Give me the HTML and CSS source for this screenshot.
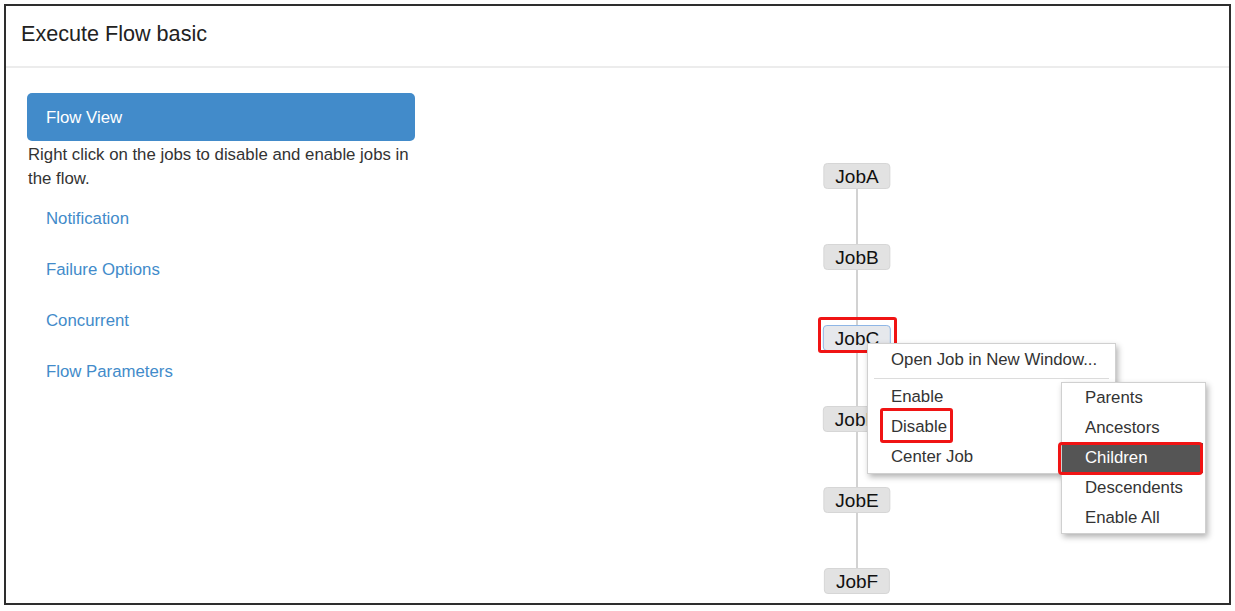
FILE: index.html
```html
<!DOCTYPE html>
<html>
<head>
<meta charset="utf-8">
<link rel="stylesheet" href="styles.css">
</head>
<body>
<div class="frame">
  <div class="header"><h3 class="title">Execute Flow basic</h3></div>
  <div class="content">
    <div class="sidebar">
      <div class="pill-active">Flow View</div>
      <p class="desc">Right click on the jobs to disable and enable jobs in the flow.</p>
      <ul class="nav">
        <li><a href="#">Notification</a></li>
        <li><a href="#">Failure Options</a></li>
        <li><a href="#">Concurrent</a></li>
        <li><a href="#">Flow Parameters</a></li>
      </ul>
    </div>
    <div class="graph">
      <div class="edge"></div>
      <div class="node n1">JobA</div>
      <div class="node n2">JobB</div>
      <div class="node n3 selected">JobC</div>
      <div class="node n4">JobD</div>
      <div class="node n5">JobE</div>
      <div class="node n6">JobF</div>
      <div class="mark mark-jobc"></div>
      <ul class="menu ctx">
        <li>Open Job in New Window...</li>
        <li class="divider"></li>
        <li>Enable</li>
        <li>Disable</li>
        <li>Center Job</li>
      </ul>
      <ul class="menu sub">
        <li>Parents</li>
        <li>Ancestors</li>
        <li class="active">Children</li>
        <li>Descendents</li>
        <li>Enable All</li>
      </ul>
      <div class="mark mark-disable"></div>
      <div class="mark mark-children"></div>
    </div>
  </div>
</div>
</body>
</html>
```
FILE: styles.css
```css
html, body {
  margin: 0;
  padding: 0;
  background: #fff;
}
body {
  font-family: "Liberation Sans", Arial, sans-serif;
  font-size: 16.8px;
  line-height: 24px;
  color: #333;
}
.frame {
  box-sizing: border-box;
  margin: 4px 4px 0 4px;
  width: 1227px;
  height: 601px;
  border: 2px solid #2e2e2e;
  display: flex;
  flex-direction: column;
  overflow: hidden;
}
.header {
  padding: 15px 15px 19px;
  border-bottom: 2px solid #ececec;
}
.title {
  margin: 0;
  font-size: 21.6px;
  line-height: 26px;
  font-weight: normal;
  color: #222;
}
.content {
  flex: 1;
  display: flex;
  padding: 25px 0 0 21px;
}
.sidebar {
  width: 388px;
  flex: none;
}
.pill-active {
  background: #428bca;
  color: #fff;
  border-radius: 5px;
  padding: 13px 19px 11px;
  line-height: 24px;
}
.desc {
  margin: 0 0 -1px;
  padding: 2px 0 0 1px;
}
.nav {
  list-style: none;
  margin: 0;
  padding: 0;
}
.nav li {
  margin-top: 3px;
}
.nav a {
  display: block;
  padding: 14px 19px 10px;
  color: #428bca;
  text-decoration: none;
}
.graph {
  flex: 1;
  position: relative;
}
.edge {
  position: absolute;
  left: 441px;
  top: 96px;
  width: 2px;
  height: 379px;
  background: #d2d2d2;
}
.node {
  position: absolute;
  left: 442px;
  transform: translateX(-50%);
  height: 24px;
  padding: 0 11px;
  font-size: 19px;
  line-height: 25px;
  color: #111;
  background: #e2e2e2;
  border: 1px solid #d6d6d6;
  border-radius: 4px;
  white-space: nowrap;
}
.n1 { top: 70px; }
.n2 { top: 151px; }
.n3 { top: 232px; }
.n4 { top: 313px; }
.n5 { top: 394px; }
.n6 { top: 475px; }
.node.selected {
  background: #e6e8ec;
  border-color: #8fb6e6;
}
.mark {
  position: absolute;
  box-sizing: border-box;
  border: 3px solid #f01414;
  border-radius: 3px;
}
.mark-jobc {
  left: 403px;
  top: 224px;
  width: 79px;
  height: 36px;
}
.mark-disable {
  left: 465px;
  top: 315px;
  width: 73px;
  height: 35px;
}
.mark-children {
  left: 643px;
  top: 349px;
  width: 145px;
  height: 33px;
  border-radius: 4px;
}
.menu {
  position: absolute;
  list-style: none;
  margin: 0;
  padding: 1px 0 1px;
  background: #fff;
  border: 1px solid #d0d0d0;
  box-shadow: 2px 3px 6px rgba(0, 0, 0, 0.3);
}
.menu li {
  padding: 3px 23px;
  height: 24px;
  line-height: 24px;
  color: #333;
  white-space: nowrap;
}
.menu li.divider {
  height: 1px;
  padding: 0;
  margin: 3px 6px;
  background: #dcdcdc;
}
.ctx {
  left: 452px;
  top: 250px;
  width: 247px;
}
.sub {
  left: 646px;
  top: 289px;
  width: 143px;
  padding: 0;
}
.sub li {
  padding-left: 23px;
}
.menu li.active {
  background: #555;
  color: #fff;
  margin-right: 2px;
}
```
